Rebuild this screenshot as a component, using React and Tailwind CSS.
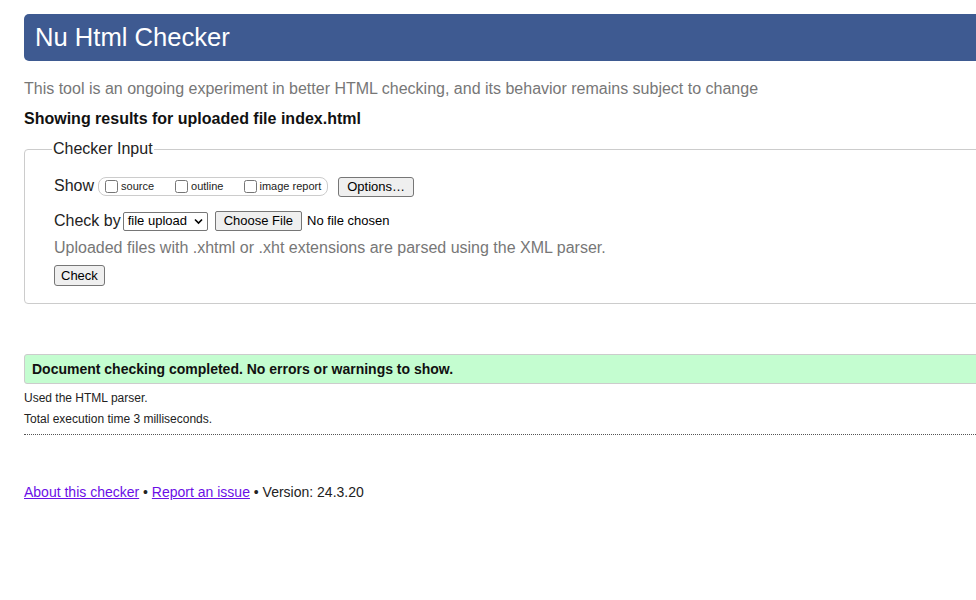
export default function App() {
  return (
    <div className="w-full min-h-[600px] overflow-hidden bg-white" style={{ fontFamily: '"Liberation Sans", Arial, sans-serif' }}>
      <div className="w-[1060px] pl-6 pt-[14px] text-[#222]">
        <h1 className="h-[47px] rounded-[5px] bg-[#3e5a91] pl-[11px] text-[25.6px] leading-[47px] font-normal text-white">
          Nu Html Checker
        </h1>
        <p className="mt-[18px] text-[16px] leading-[20px] text-[#777]">
          This tool is an ongoing experiment in better HTML checking, and its behavior remains subject to change
        </p>
        <p className="mt-[10px] text-[16px] leading-[20px] font-bold text-[#111]">
          Showing results for uploaded file index.html
        </p>
        <fieldset className="mt-[10px] h-[165px] rounded-[4px] border border-[#ccc] pl-[29px] pr-4">
          <legend className="ml-[-2px] px-[1px] text-[16px] leading-[20px] text-[#222]">Checker Input</legend>
          <div className="mt-[17px] flex items-center h-[20px]">
            <span className="text-[16px] mr-[4px]">Show</span>
            <div className="flex items-center h-[19px] rounded-[8px] border border-[#ccc] pl-[6px] pr-[6px] text-[11px] mt-[1px]">
              <label className="flex items-center">
                <input type="checkbox" className="m-0 mr-[3px] h-[13px] w-[13px]" />
                source
              </label>
              <label className="flex items-center ml-[21px]">
                <input type="checkbox" className="m-0 mr-[3px] h-[13px] w-[13px]" />
                outline
              </label>
              <label className="flex items-center ml-[21px]">
                <input type="checkbox" className="m-0 mr-[2px] h-[13px] w-[13px]" />
                image report
              </label>
            </div>
            <button className="ml-[10px] h-[20px] rounded-[3px] border border-[#767676] bg-[#efefef] px-[8px] text-[13px] leading-[18px] text-black mt-[1px]">
              Options…
            </button>
          </div>
          <div className="mt-[15px] flex items-center h-[20px]">
            <span className="text-[16px] mr-[2px]">Check by</span>
            <div className="relative flex items-center h-[19px] w-[85px] rounded-[2px] border border-[#767676] bg-white pl-[4px] text-[13px] text-black">
              file upload
              <svg className="absolute right-[4px] top-[5px]" width="9" height="7" viewBox="0 0 9 7">
                <path d="M1 1.5 L4.5 5 L8 1.5" fill="none" stroke="#000" strokeWidth="1.6" />
              </svg>
            </div>
            <button className="ml-[7px] h-[20px] rounded-[2px] border border-[#767676] bg-[#efefef] px-[8px] text-[13px] leading-[18px] text-black">
              Choose File
            </button>
            <span className="ml-[5px] text-[13px] text-black">No file chosen</span>
          </div>
          <p className="mt-[7px] text-[16px] leading-[20px] text-[#777]">
            Uploaded files with .xhtml or .xht extensions are parsed using the XML parser.
          </p>
          <button className="mt-[7px] h-[21px] rounded-[3px] border border-[#767676] bg-[#efefef] px-[6px] text-[13px] leading-[18px] text-black">
            Check
          </button>
        </fieldset>
        <div className="mt-[50px] h-[30px] rounded-l-[3px] border border-[#ccc] bg-[#c4fdd0] pl-[7px] text-[14px] leading-[28px] font-bold text-[#111]">
          Document checking completed. No errors or warnings to show.
        </div>
        <p className="mt-[7px] text-[12px] leading-[15px] text-[#222]">Used the HTML parser.</p>
        <p className="mt-[6px] text-[12px] leading-[15px] text-[#222]">Total execution time 3 milliseconds.</p>
        <div className="mt-[7px] border-t border-dotted border-[#555]"></div>
        <p className="mt-[48px] text-[14px] leading-[18px] text-[#222]">
          <a href="#" className="text-[#6b0fe6] underline">About this checker</a>
          {" • "}
          <a href="#" className="text-[#6b0fe6] underline">Report an issue</a>
          {" • Version: 24.3.20"}
        </p>
      </div>
    </div>
  );
}
